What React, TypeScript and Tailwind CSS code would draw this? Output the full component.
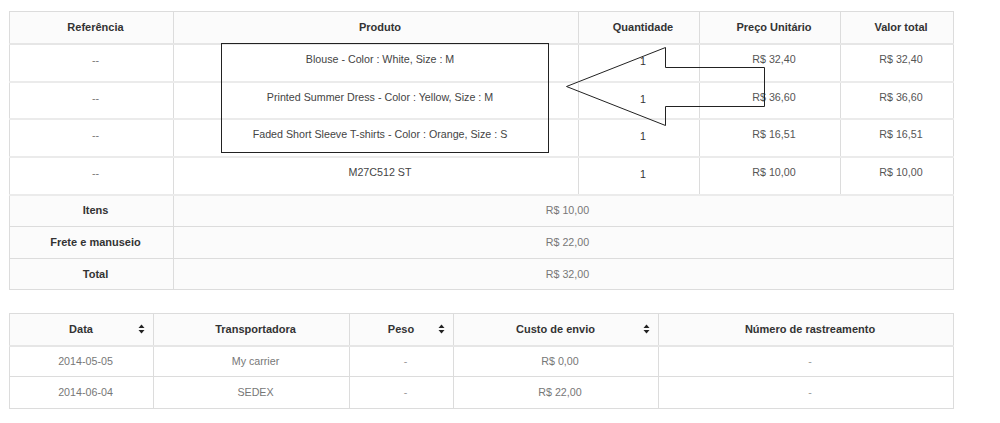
import React from 'react';

const font = { fontFamily: '"Liberation Sans", Arial, Helvetica, sans-serif' };

const products = [
  { ref: '--', name: 'Blouse - Color : White, Size : M', qty: 1, unit: 'R$ 32,40', total: 'R$ 32,40' },
  { ref: '--', name: 'Printed Summer Dress - Color : Yellow, Size : M', qty: 1, unit: 'R$ 36,60', total: 'R$ 36,60' },
  { ref: '--', name: 'Faded Short Sleeve T-shirts - Color : Orange, Size : S', qty: 1, unit: 'R$ 16,51', total: 'R$ 16,51' },
  { ref: '--', name: 'M27C512 ST', qty: 1, unit: 'R$ 10,00', total: 'R$ 10,00' },
];

const rowHeights = ['h-[38px]', 'h-[37px]', 'h-[38px]', 'h-[38px]'];

const summary = [
  { label: 'Itens', value: 'R$ 10,00', h: 'h-[32px]' },
  { label: 'Frete e manuseio', value: 'R$ 22,00', h: 'h-[32px]' },
  { label: 'Total', value: 'R$ 32,00', h: 'h-[31px]' },
];

const shipping = [
  { date: '2014-05-05', carrier: 'My carrier', weight: '-', cost: 'R$ 0,00', tracking: '-' },
  { date: '2014-06-04', carrier: 'SEDEX', weight: '-', cost: 'R$ 22,00', tracking: '-' },
];

const SortIcon = () => (
  <svg width="7" height="10" viewBox="0 0 7 10" className="absolute right-[8px] top-1/2 -translate-y-1/2">
    <path d="M3.5 0.5 L6.5 4 H0.5 Z" fill="#222" />
    <path d="M3.5 9.5 L6.5 6 H0.5 Z" fill="#222" />
  </svg>
);

export default function App() {
  const th = 'border border-[#dcdcdc] border-b-2 border-b-[#e6e6e6] bg-[#fbfbfb] font-bold text-[11px] text-[#333] text-center pl-[8px]';
  const td = 'border border-[#dcdcdc] border-b-2 border-b-[#ebebeb] text-center pl-[8px]';

  return (
    <div className="w-[1000px] h-[423px] bg-white pt-[11px] pl-[9px] text-[10.7px] leading-none" style={font}>
      {/* Order items */}
      <div className="relative w-[944px]">
        <table className="w-[944px] table-fixed border-collapse">
          <colgroup>
            <col className="w-[164px]" />
            <col className="w-[405px]" />
            <col className="w-[121px]" />
            <col className="w-[141px]" />
            <col className="w-[113px]" />
          </colgroup>
          <thead>
            <tr className="h-[32px]">
              <th className={th}>Referência</th>
              <th className={th}>Produto</th>
              <th className={th}>Quantidade</th>
              <th className={th}>Preço Unitário</th>
              <th className={th}>Valor total</th>
            </tr>
          </thead>
          <tbody>
            {products.map((p, i) => (
              <tr key={i} className={`${rowHeights[i]} bg-white`}>
                <td className={`${td} text-[#777] pb-[4px]`}>{p.ref}</td>
                <td className={`${td} text-[#444] pb-[6px]`}>{p.name}</td>
                <td className={`${td} text-[#333] pb-[2px]`}>{p.qty}</td>
                <td className={`${td} text-[#555] pb-[6px]`}>{p.unit}</td>
                <td className={`${td} text-[#555] pb-[6px]`}>{p.total}</td>
              </tr>
            ))}
            {summary.map((s, i) => (
              <tr key={i} className={`${s.h} bg-[#fbfbfb]`}>
                <td className="border border-[#dcdcdc] text-center font-bold text-[11px] text-[#333] pl-[8px]">{s.label}</td>
                <td colSpan={4} className="border border-[#dcdcdc] text-center text-[#777] pl-[8px]">{s.value}</td>
              </tr>
            ))}
          </tbody>
        </table>

        {/* Annotation: box around products */}
        <div className="absolute left-[212px] top-[32px] w-[328px] h-[110px] border border-[#222] pointer-events-none" />

        {/* Annotation: arrow pointing left */}
        <svg
          className="absolute left-0 top-0 pointer-events-none"
          width="944"
          height="160"
          viewBox="0 0 944 160"
        >
          <path
            d="M557.5 75.5 L656.5 36.5 L656.5 56.5 L755.5 56.5 L755.5 95.5 L656.5 95.5 L656.5 114.5 Z"
            fill="none"
            stroke="#222"
            strokeWidth="1"
          />
        </svg>
      </div>

      {/* Shipping */}
      <table className="mt-[23px] w-[944px] table-fixed border-collapse">
        <colgroup>
          <col className="w-[144px]" />
          <col className="w-[196px]" />
          <col className="w-[104px]" />
          <col className="w-[205px]" />
          <col className="w-[295px]" />
        </colgroup>
        <thead>
          <tr className="h-[32px]">
            <th className={`${th} relative pr-[9px]`}>
              Data
              <SortIcon />
            </th>
            <th className={th}>Transportadora</th>
            <th className={`${th} relative pr-[9px]`}>
              Peso
              <SortIcon />
            </th>
            <th className={`${th} relative pr-[9px]`}>
              Custo de envio
              <SortIcon />
            </th>
            <th className={th}>Número de rastreamento</th>
          </tr>
        </thead>
        <tbody>
          {shipping.map((s, i) => (
            <tr key={i} className={i === 0 ? 'h-[31px]' : 'h-[32px]'}>
              <td className="border border-[#dcdcdc] text-center text-[#777] pl-[8px]">{s.date}</td>
              <td className="border border-[#dcdcdc] text-center text-[#777] pl-[8px]">{s.carrier}</td>
              <td className="border border-[#dcdcdc] text-center text-[#999] pl-[8px]">{s.weight}</td>
              <td className="border border-[#dcdcdc] text-center text-[#777] pl-[8px]">{s.cost}</td>
              <td className="border border-[#dcdcdc] text-center text-[#999] pl-[8px]">{s.tracking}</td>
            </tr>
          ))}
        </tbody>
      </table>
    </div>
  );
}
